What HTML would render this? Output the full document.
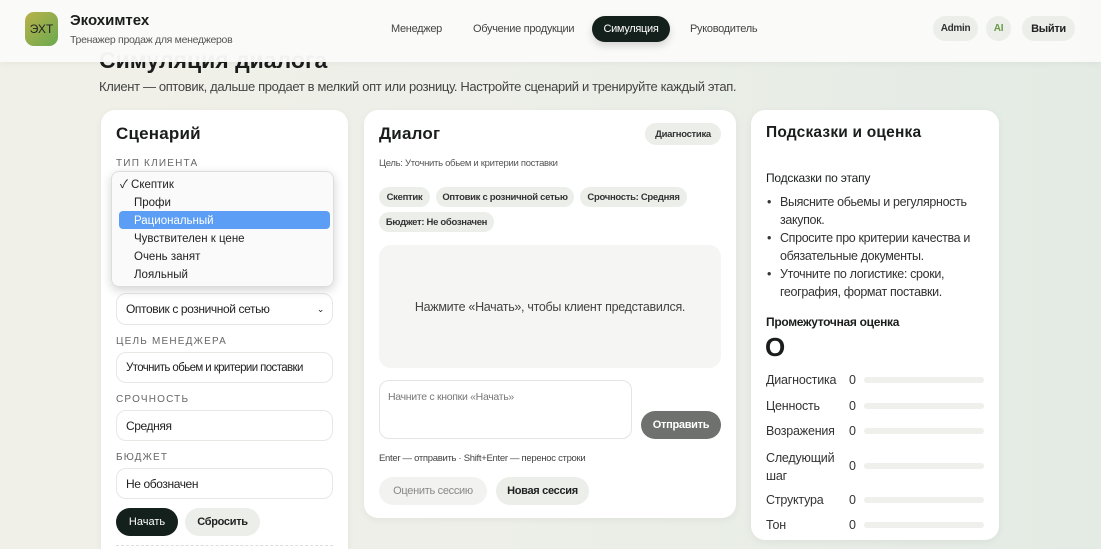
<!DOCTYPE html>
<html><head><meta charset="utf-8"><style>
*{box-sizing:border-box;margin:0;padding:0}
html{width:1101px;height:549px;overflow:hidden}
body{width:1101px;height:549px;overflow:hidden;position:relative;font-family:"Liberation Sans","Noto Sans CJK SC",sans-serif;color:#1a1d1b;background:linear-gradient(90deg,#f1f0e8 0%,#edefe8 45%,#e3ebe4 100%);white-space:nowrap}
.a{position:absolute}
.hdr{left:0;top:0;width:1101px;height:62px;background:rgba(250,250,248,.97);box-shadow:0 2px 6px rgba(0,0,0,.04)}
.card{background:#fff;border-radius:14px;box-shadow:0 2px 8px rgba(0,0,0,.05)}
.pill{border-radius:16px;background:#eceeea;font-size:10px;font-weight:bold;color:#333;display:flex;align-items:center;justify-content:center;letter-spacing:-.3px}
.h{font-weight:900;font-size:17px;letter-spacing:.2px}
.lbl{font-size:10px;color:#666;letter-spacing:1.2px}
.inp{border:1px solid #e6e8e4;border-radius:10px;background:#fff;font-size:12px;padding-left:9px;display:flex;align-items:center;color:#222;letter-spacing:-.4px}
.t{font-size:12.5px;color:#333;letter-spacing:-.2px}
.bar{height:6px;border-radius:3px;background:#efefec;left:864px;width:120px}
</style></head><body>
<div class="a" style="left:99px;top:47px;font-size:23px;font-weight:900;">Симуляция диалога</div>
<div class="a hdr"></div>
<div class="a" style="left:25px;top:12px;width:33px;height:34px;border-radius:9px;background:linear-gradient(135deg,#b9b24a,#6aa94f);font-size:12px;display:flex;align-items:center;justify-content:center;color:#222">ЭХТ</div>
<div class="a" style="left:70px;top:12px;font-size:15px;font-weight:900">Экохимтех</div>
<div class="a" style="left:70px;top:34px;font-size:10.5px;color:#555;letter-spacing:-.3px">Тренажер продаж для менеджеров</div>
<div class="a" style="left:391px;top:23px;font-size:11px;color:#444;letter-spacing:-.3px">Менеджер</div>
<div class="a" style="left:473px;top:23px;font-size:11px;color:#444;letter-spacing:-.3px">Обучение продукции</div>
<div class="a" style="left:592px;top:16px;width:78px;height:26px;border-radius:14px;background:#14201b;color:#fff;font-size:11px;letter-spacing:-.3px;display:flex;align-items:center;justify-content:center;box-shadow:0 4px 8px rgba(0,0,0,.15)">Симуляция</div>
<div class="a" style="left:690px;top:23px;font-size:11px;color:#444;letter-spacing:-.3px">Руководитель</div>
<div class="a pill" style="left:933px;top:16px;width:45px;height:25px;font-size:10px">Admin</div>
<div class="a pill" style="left:986px;top:16px;width:25px;height:25px;font-size:10px;color:#6a9a4a">AI</div>
<div class="a pill" style="left:1022px;top:16px;width:53px;height:25px;font-size:11px;color:#222">Выйти</div>
<div class="a" style="left:99px;top:79px;font-size:13px;color:#444;letter-spacing:-.35px">Клиент — оптовик, дальше продает в мелкий опт или розницу. Настройте сценарий и тренируйте каждый этап.</div>

<div class="a card" style="left:101px;top:110px;width:247px;height:460px"></div>
<div class="a h" style="left:116px;top:124px">Сценарий</div>
<div class="a lbl" style="left:116px;top:158px">ТИП КЛИЕНТА</div>
<div class="a inp" style="left:116px;top:293px;width:217px;height:32px">Оптовик с розничной сетью<span style="position:absolute;right:8px;font-size:9px">⌄</span></div>
<div class="a lbl" style="left:116px;top:336px">ЦЕЛЬ МЕНЕДЖЕРА</div>
<div class="a inp" style="left:116px;top:352px;width:217px;height:31px;font-size:11.5px;letter-spacing:-.6px">Уточнить обьем и критерии поставки</div>
<div class="a lbl" style="left:116px;top:394px">СРОЧНОСТЬ</div>
<div class="a inp" style="left:116px;top:410px;width:217px;height:31px">Средняя</div>
<div class="a lbl" style="left:116px;top:452px">БЮДЖЕТ</div>
<div class="a inp" style="left:116px;top:468px;width:217px;height:31px">Не обозначен</div>
<div class="a" style="left:116px;top:508px;width:62px;height:28px;border-radius:14px;background:#14201b;color:#fff;font-size:11px;display:flex;align-items:center;justify-content:center">Начать</div>
<div class="a pill" style="left:185px;top:508px;width:75px;height:28px;font-size:11px;color:#222">Сбросить</div>
<div class="a" style="left:116px;top:545px;width:217px;border-top:1px dashed #ddd"></div>

<div class="a" style="left:111px;top:171px;width:223px;height:116px;border-radius:8px;background:rgba(250,250,250,.98);box-shadow:0 3px 10px rgba(0,0,0,.18);border:1px solid #ddd"></div>
<div class="a" style="left:119px;top:211px;width:211px;height:18px;border-radius:4px;background:#5c9ef5"></div>
<div class="a" style="left:120px;top:176px;color:#222;font-size:11.5px;line-height:18px"><div>✓ Скептик</div><div style="padding-left:14px">Профи</div><div style="padding-left:14px;color:#fff">Рациональный</div><div style="padding-left:14px">Чувствителен к цене</div><div style="padding-left:14px">Очень занят</div><div style="padding-left:14px">Лояльный</div></div>

<div class="a card" style="left:364px;top:110px;width:372px;height:408px"></div>
<div class="a h" style="left:379px;top:124px">Диалог</div>
<div class="a pill" style="left:645px;top:123px;width:76px;height:22px;font-size:9.5px">Диагностика</div>
<div class="a" style="left:379px;top:158px;font-size:9.5px;color:#555;letter-spacing:-.3px">Цель: Уточнить обьем и критерии поставки</div>
<div class="a pill" style="left:379px;top:187px;width:51px;height:20px;font-size:9.5px">Скептик</div>
<div class="a pill" style="left:436px;top:187px;width:138px;height:20px;font-size:9.5px">Оптовик с розничной сетью</div>
<div class="a pill" style="left:580px;top:187px;width:107px;height:20px;font-size:9.5px">Срочность: Средняя</div>
<div class="a pill" style="left:379px;top:212px;width:115px;height:20px;font-size:9.5px">Бюджет: Не обозначен</div>
<div class="a" style="left:379px;top:245px;width:342px;height:123px;border-radius:12px;background:#f5f5f4;display:flex;align-items:center;justify-content:center;font-size:12.5px;color:#444;letter-spacing:-.3px">Нажмите «Начать», чтобы клиент представился.</div>
<div class="a" style="left:379px;top:380px;width:253px;height:59px;border:1px solid #e3e5e1;border-radius:10px;font-size:10.5px;color:#777;padding:10px 8px;letter-spacing:-.3px">Начните с кнопки «Начать»</div>
<div class="a" style="left:641px;top:411px;width:80px;height:28px;border-radius:14px;background:#6e716e;color:#fff;font-size:11px;font-weight:bold;display:flex;align-items:center;justify-content:center;letter-spacing:-.3px">Отправить</div>
<div class="a" style="left:379px;top:453px;font-size:9.5px;color:#444;letter-spacing:-.3px">Enter — отправить · Shift+Enter — перенос строки</div>
<div class="a pill" style="left:379px;top:477px;width:108px;height:28px;font-size:11px;font-weight:normal;color:#888;background:#f2f3f0">Оценить сессию</div>
<div class="a pill" style="left:496px;top:477px;width:93px;height:28px;font-size:11px;color:#222">Новая сессия</div>

<div class="a card" style="left:751px;top:110px;width:248px;height:430px"></div>
<div class="a h" style="left:766px;top:124px;font-size:15.5px">Подсказки и оценка</div>
<div class="a" style="left:766px;top:171px;font-size:12px;letter-spacing:-.2px">Подсказки по этапу</div>
<div class="a t" style="left:766px;top:193px;line-height:18px;width:225px;white-space:normal;letter-spacing:-.35px">
<div style="padding-left:14px;position:relative"><span style="position:absolute;left:1px">•</span>Выясните обьемы и регулярность закупок.</div>
<div style="padding-left:14px;position:relative"><span style="position:absolute;left:1px">•</span>Спросите про критерии качества и обязательные документы.</div>
<div style="padding-left:14px;position:relative"><span style="position:absolute;left:1px">•</span>Уточните по логистике: сроки, география, формат поставки.</div></div>
<div class="a" style="left:766px;top:315px;font-size:12px;font-weight:bold;letter-spacing:-.3px">Промежуточная оценка</div>
<div class="a" style="left:765px;top:332px;font-size:26px;font-weight:900">O</div>
<div class="a t" style="left:766px;top:373px">Диагностика</div><div class="a t" style="left:849px;top:373px">0</div><div class="a bar" style="top:377px"></div>
<div class="a t" style="left:766px;top:399px">Ценность</div><div class="a t" style="left:849px;top:399px">0</div><div class="a bar" style="top:403px"></div>
<div class="a t" style="left:766px;top:424px">Возражения</div><div class="a t" style="left:849px;top:424px">0</div><div class="a bar" style="top:428px"></div>
<div class="a t" style="left:766px;top:449px;line-height:18px">Следующий<br>шаг</div><div class="a t" style="left:849px;top:459px">0</div><div class="a bar" style="top:463px"></div>
<div class="a t" style="left:766px;top:493px">Структура</div><div class="a t" style="left:849px;top:493px">0</div><div class="a bar" style="top:497px"></div>
<div class="a t" style="left:766px;top:518px">Тон</div><div class="a t" style="left:849px;top:518px">0</div><div class="a bar" style="top:522px"></div>
</body></html>
